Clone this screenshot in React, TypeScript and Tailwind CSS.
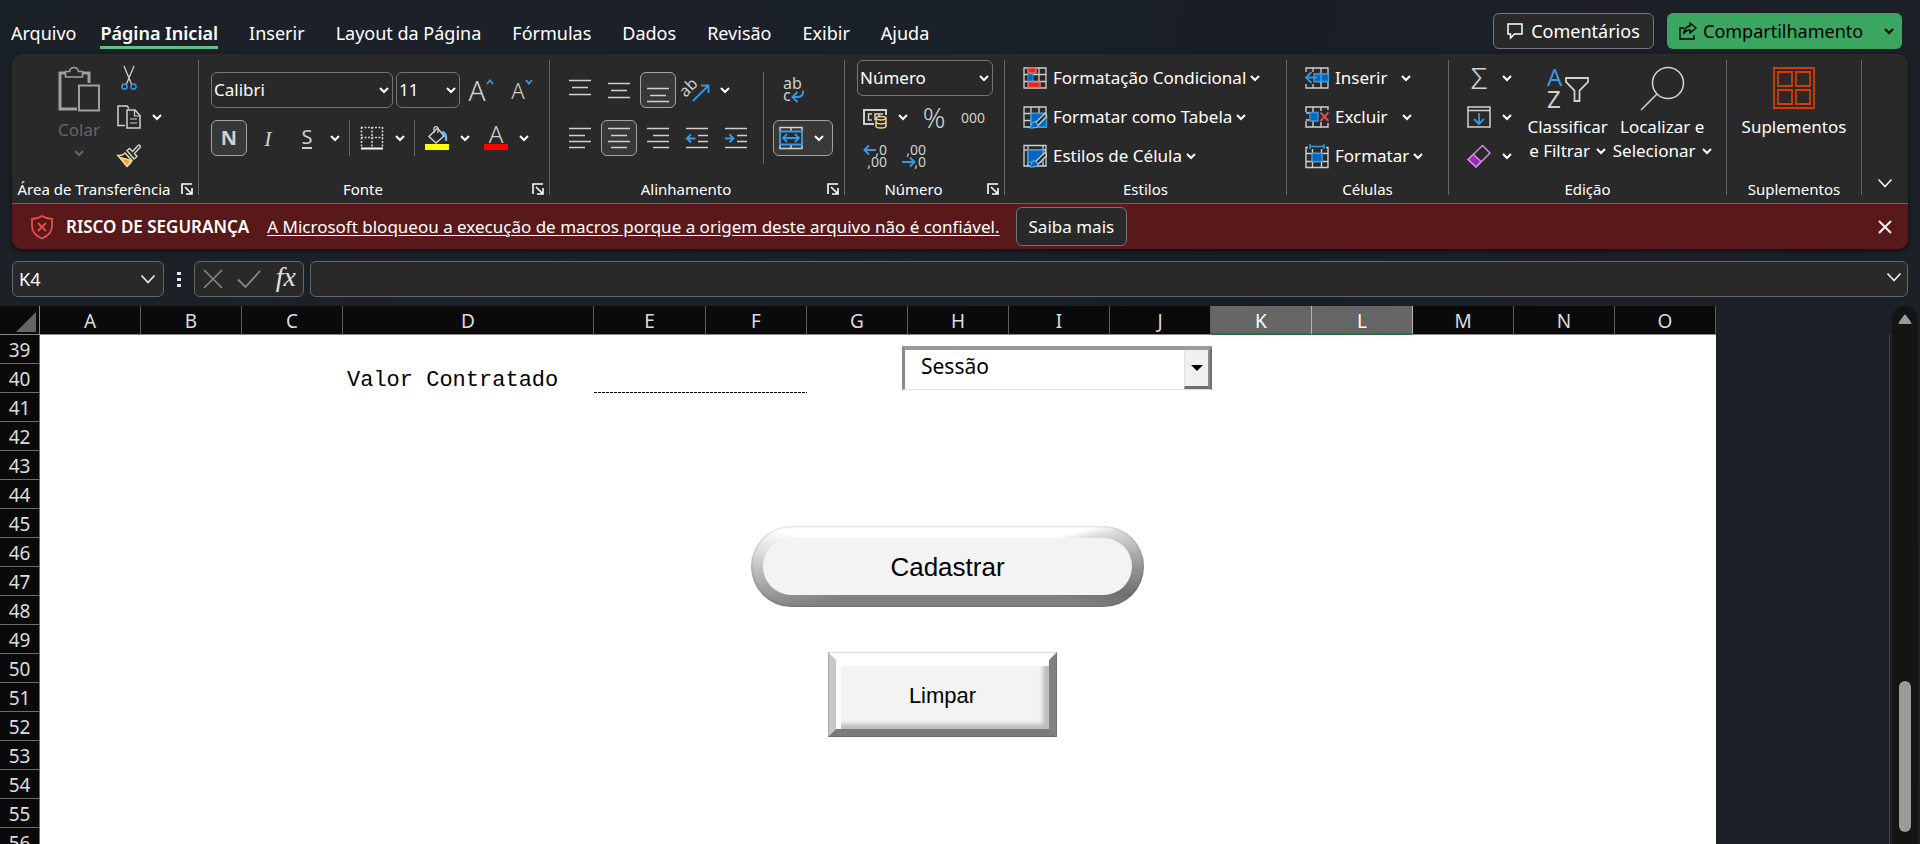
import React, { useState } from 'react';

interface IconProps {
    children: React.ReactNode;
    className?: string;
    viewBox?: string;
}

const Icon: React.FC<IconProps> = ({ children, className = 'w-6 h-6', viewBox = '0 0 24 24' }) => (
    <svg className={`shrink-0 overflow-visible ${className}`} viewBox={viewBox} fill="none" stroke="#d0d0d0" strokeWidth={1.5} aria-hidden="true">
        {children}
    </svg>
);

const Chevron: React.FC<{ className?: string }> = ({ className = 'text-white' }) => (
    <svg className={`w-2.5 h-2.5 shrink-0 ${className}`} viewBox="0 0 10 10" fill="none" stroke="currentColor" strokeWidth={2} aria-hidden="true">
        <path d="M1 3l4 4 4-4" />
    </svg>
);

const BigChevron: React.FC<{ className?: string }> = ({ className = 'w-4 h-4' }) => (
    <svg className={`shrink-0 text-gray-200 ${className}`} viewBox="0 0 16 16" fill="none" stroke="currentColor" strokeWidth={1.8} aria-hidden="true">
        <path d="M1.5 4.5l6.5 7 6.5-7" />
    </svg>
);

interface ToolProps {
    label: string;
    active?: boolean;
    children: React.ReactNode;
}

const Tool: React.FC<ToolProps> = ({ label, active, children }) => (
    <button
        aria-label={label}
        className={`w-9 h-9 shrink-0 flex items-center justify-center rounded-md text-[#d0d0d0] ${active ? 'bg-[#383837] border border-[#a3a3a3]' : ''}`}
    >
        {children}
    </button>
);

const SplitTool: React.FC<ToolProps> = ({ label, children }) => (
    <div className="flex items-center">
        <Tool label={label}>{children}</Tool>
        <button aria-label={`${label}: opções`} className="w-5 h-9 flex items-center justify-center">
            <Chevron />
        </button>
    </div>
);

interface GroupProps {
    title: string;
    width: string;
    launcher?: boolean;
    children: React.ReactNode;
}

const Group: React.FC<GroupProps> = ({ title, width, launcher, children }) => (
    <section className={`h-[135px] shrink-0 flex flex-col justify-between border-r border-[#666666] ${width}`}>
        {children}
        <div className="flex items-center h-3">
            <h2 className="flex-1 text-center text-[15px] leading-3 whitespace-nowrap">{title}</h2>
            {launcher && (
                <button aria-label={`Opções de ${title}`} className="w-[22px] flex justify-center">
                    <svg className="w-3 h-3" viewBox="0 0 12 12" fill="none" stroke="#fff" strokeWidth={1.6} aria-hidden="true">
                        <path d="M1 11V1h10M4 4l6 6M11 5v6H5" />
                    </svg>
                </button>
            )}
        </div>
    </section>
);

const Divider = () => <span className="w-px h-9 mx-px bg-[#666666]" />;

interface DropdownProps {
    label: string;
    value: string;
    width: string;
}

const Dropdown: React.FC<DropdownProps> = ({ label, value, width }) => (
    <div className={`relative ${width}`}>
        <select aria-label={label} className="w-full h-9 pl-0.5 appearance-none rounded-md border border-[#757575] bg-[#292929] text-[17px] text-white">
            <option>{value}</option>
        </select>
        <Chevron className="absolute right-1 top-[13px] pointer-events-none text-white" />
    </div>
);

const lineSets: Record<string, string> = {
    top: 'M1 2.5h22M4 9.5h16M1 16.5h22',
    middle: 'M1 5.5h22M4 12.5h16M1 19.5h22',
    bottom: 'M1 10.5h22M4 17.5h16M1 23.5h22',
    left: 'M1 2.5h22M1 9.5h16M1 15.5h22M1 21.5h16',
    center: 'M1 2.5h22M4 9.5h16M1 15.5h22M4 21.5h16',
    right: 'M1 2.5h22M7 9.5h16M1 15.5h22M7 21.5h16',
    indent: 'M1 2.5h22M13 9.5h10M13 15.5h10M1 21.5h22',
};

const Lines: React.FC<{ kind: string; children?: React.ReactNode }> = ({ kind, children }) => (
    <Icon>
        <path d={lineSets[kind]} />
        {children}
    </Icon>
);

const GridBase = () => <path d="M1 2h22v20H1zM1 8.5h22M1 15.5h22M8 2v20M16 2v20" strokeWidth={1.3} />;

const BrushMark = () => (
    <>
        <path d="M22.5 8L12.5 17.5l2.5 3L23.5 11.5z" fill="#292929" strokeWidth={1.3} />
        <path d="M12.500 17c-3-.5-4 1.500-4.500 3.500-.3 1-2 1.800-3 1.800 3.500 1.500 9.500 .7 10.300-2.300z" fill="#0067c0" stroke="#7cc0f5" strokeWidth={1} />
    </>
);

interface CommandProps {
    icon: React.ReactNode;
    text: string;
    gap?: string;
}

const Command: React.FC<CommandProps> = ({ icon, text, gap = 'ml-1' }) => (
    <button className="h-9 flex items-center text-[17px] whitespace-nowrap">
        {icon}
        <span className="ml-1.5">{text}</span>
        <span className={gap}>
            <Chevron />
        </span>
    </button>
);

const Clipboard = () => (
    <Group title="Área de Transferência" width="w-[187px]" launcher>
        <div className="flex pl-[41px]">
            <button className="w-[52px] pt-1.5 flex flex-col items-center text-[17px] text-[#666666]">
                <svg className="w-[42px] h-[46px]" viewBox="0 0 42 46" fill="none" stroke="#a0a0a0" strokeWidth={2} aria-hidden="true">
                    <path d="M7 7H2v36h17" strokeWidth={3} />
                    <path d="M24 7h7v10" strokeWidth={3} />
                    <path d="M7.5 11V5.5h4C12 2.5 14 1.5 16 1.5s4 1 4.5 4h4V11z" strokeWidth={1.6} />
                    <path d="M21 19.5h20v25H21z" />
                </svg>
                <span className="leading-9">Colar</span>
                <Chevron className="text-[#666666]" />
            </button>
            <div className="flex flex-col gap-[3px] pl-1.5">
                <Tool label="Recortar">
                    <Icon>
                        <path d="M7 0l7.500 18M17 0L9.500 18" strokeWidth={1.3} />
                        <circle cx="7.500" cy="20.500" r="2.600" stroke="#3a96dd" />
                        <circle cx="16.500" cy="20.500" r="2.600" stroke="#3a96dd" />
                    </Icon>
                </Tool>
                <SplitTool label="Copiar">
                    <Icon>
                        <path d="M8 20.5H1V1h9l2 2.5" />
                        <path d="M10 5h8l5 5.5V23H10z" />
                        <path d="M17.5 5v6H23M13 14h7M13 18h7" strokeWidth={1.2} />
                    </Icon>
                </SplitTool>
                <Tool label="Pincel de Formatação">
                    <Icon>
                        <path d="M1 11.5c3 .5 5-.5 7-2.5l7 7.5c-1 3-3 4.5-5 6z" fill="#292929" stroke="#f7d48a" />
                        <path d="M3 13.5l11 3-4 5.500z" fill="#e8a33d" stroke="#f7d48a" />
                        <path d="M10 6.5l2.5-2 3 3L21 1.5c1.5-1 3 .5 2 2L17.5 9.500l2.500 3-3 2.500z" fill="#292929" />
                    </Icon>
                </Tool>
            </div>
        </div>
    </Group>
);

const FontGroup = () => (
    <Group title="Fonte" width="w-[351px]" launcher>
        <div className="flex flex-col gap-3 pl-3 pt-3">
            <div className="flex gap-[3px]">
                <Dropdown label="Fonte" value="Calibri" width="w-[182px]" />
                <Dropdown label="Tamanho da Fonte" value="11" width="w-16" />
                <Tool label="Aumentar Tamanho da Fonte">
                    <span className="text-[28px] leading-9 font-light">A</span>
                    <svg className="w-2 h-2 mb-4" viewBox="0 0 8 8" fill="none" stroke="#3a96dd" strokeWidth={1.8} aria-hidden="true">
                        <path d="M1 6l3-3.5L7 6" />
                    </svg>
                </Tool>
                <Tool label="Diminuir Tamanho da Fonte">
                    <span className="ml-1 text-[22px] leading-9 font-light">A</span>
                    <svg className="w-2 h-2 mb-4" viewBox="0 0 8 8" fill="none" stroke="#3a96dd" strokeWidth={1.8} aria-hidden="true">
                        <path d="M1 2l3 3.5L7 2" />
                    </svg>
                </Tool>
            </div>
            <div className="flex items-center gap-[3px]">
                <Tool label="Negrito" active>
                    <span className="text-[20px] leading-8 font-bold">N</span>
                </Tool>
                <Tool label="Itálico">
                    <span className="text-[22px] italic font-['Liberation_Serif',serif]">I</span>
                </Tool>
                <SplitTool label="Sublinhado">
                    <span className="text-[20px] leading-5 border-b-2 border-[#d0d0d0]">S</span>
                </SplitTool>
                <Divider />
                <SplitTool label="Bordas">
                    <Icon>
                        <path d="M1 1.5h22M1.5 1v20M22.5 1v20M12 1v20M1 11.5h22" strokeWidth={1.6} strokeDasharray="2 1.5" />
                        <path d="M1 22.5h22" stroke="#fff" strokeWidth={2} />
                    </Icon>
                </SplitTool>
                <Divider />
                <SplitTool label="Cor de Preenchimento">
                    <Icon>
                        <path d="M4 10.5L12.5 2l6.5 8-8 7z" />
                        <path d="M9 7V2.5c0-2.5 4-2.5 4 0V7" strokeWidth={1.3} />
                        <path d="M17 6c3.5.5 4.5 3 4 9" stroke="#6cb4ee" strokeWidth={2.5} />
                        <path d="M0 21h24" stroke="#ffff00" strokeWidth={6} />
                    </Icon>
                </SplitTool>
                <SplitTool label="Cor da Fonte">
                    <span className="w-6 h-6 flex justify-center text-[24px] leading-4 font-light border-b-[6px] border-[#ff0000]">A</span>
                </SplitTool>
            </div>
        </div>
    </Group>
);

const AlignmentGroup = () => (
    <Group title="Alinhamento" width="w-[295px]" launcher>
        <div className="flex pl-3 pt-3">
            <div className="flex flex-col gap-3">
                <div className="flex gap-[3px]">
                    <Tool label="Alinhar em Cima"><Lines kind="top" /></Tool>
                    <Tool label="Alinhar no Meio"><Lines kind="middle" /></Tool>
                    <Tool label="Alinhar Embaixo" active><Lines kind="bottom" /></Tool>
                    <SplitTool label="Orientação">
                        <Icon>
                            <text x="-2" y="16" transform="rotate(-45 4 15)" fontSize="16" fill="#d0d0d0" stroke="none">ab</text>
                            <path d="M8 23L23 8M16 7.5h7.5V15" stroke="#3a96dd" strokeWidth={1.8} />
                        </Icon>
                    </SplitTool>
                </div>
                <div className="flex gap-[3px]">
                    <Tool label="Alinhar à Esquerda"><Lines kind="left" /></Tool>
                    <Tool label="Centralizar" active><Lines kind="center" /></Tool>
                    <Tool label="Alinhar à Direita"><Lines kind="right" /></Tool>
                    <Tool label="Diminuir Recuo">
                        <Lines kind="indent"><path d="M10.5 12.5H2M6 8.5l-4 4 4 4" stroke="#3a96dd" strokeWidth={2} /></Lines>
                    </Tool>
                    <Tool label="Aumentar Recuo">
                        <Lines kind="indent"><path d="M1 12.5h8.5M5.5 8.5l4 4-4 4" stroke="#3a96dd" strokeWidth={2} /></Lines>
                    </Tool>
                </div>
            </div>
            <span className="w-px h-[92px] mx-[9px] bg-[#666666]" />
            <div className="flex flex-col gap-3">
                <button aria-label="Quebrar Texto Automaticamente" className="w-10 h-9 flex items-center justify-center">
                    <Icon>
                        <text x="2" y="11" fontSize="16" fill="#d0d0d0" stroke="none">ab</text>
                        <text x="2" y="23" fontSize="16" fill="#d0d0d0" stroke="none">c</text>
                        <path d="M22 12.500c1 4-2 6.500-5 6.500h-5M16.500 14l-5 5 5 5" stroke="#3a96dd" strokeWidth={2} />
                    </Icon>
                </button>
                <button aria-label="Mesclar e Centralizar" className="w-[60px] h-9 px-[5px] pr-2 flex items-center justify-between rounded-md border border-[#a3a3a3] bg-[#383837]">
                    <Icon>
                        <path d="M1 1.5h22v21H1zM12 1v5M12 18v5" />
                        <path d="M1 5.5h22v13H1z" fill="#292929" stroke="#3a96dd" strokeWidth={2} />
                        <path d="M4 12h16M8 8l-4 4 4 4M16 8l4 4-4 4" stroke="#3a96dd" strokeWidth={1.8} />
                    </Icon>
                    <Chevron />
                </button>
            </div>
        </div>
    </Group>
);

const NumberGroup = () => (
    <Group title="Número" width="w-[160px]" launcher>
        <div className="flex flex-col gap-[3px] pl-3">
            <Dropdown label="Formato de Número" value="Número" width="w-[136px]" />
            <div className="flex items-center gap-[3px]">
                <SplitTool label="Formato de Número de Contabilização">
                    <Icon>
                        <path d="M11 19H1V5h22v5" strokeWidth={2} />
                        <path d="M9 9H5.5v6H9M16 14V9h-4v6M16 9h4" />
                        <path d="M13 13v8.500c1 2 9 2 10 0V13c-1-2-9-2-10 0z" fill="#292929" stroke="#f7d48a" />
                        <path d="M13 13.5c2 2 8 2 10 0M13 17.5c2 2 8 2 10 0" stroke="#f7d48a" />
                    </Icon>
                </SplitTool>
                <Tool label="Estilo de Porcentagem"><span className="text-[28px] leading-9 font-light">%</span></Tool>
                <Tool label="Separador de Milhares"><span className="text-[14px]">000</span></Tool>
            </div>
            <div className="flex items-center gap-[3px]">
                <Tool label="Aumentar Casas Decimais">
                    <Icon>
                        <text x="24" y="11" textAnchor="end" fontSize="14" fill="#d0d0d0" stroke="none">,0</text>
                        <text x="24" y="23" textAnchor="end" fontSize="14" fill="#d0d0d0" stroke="none">,00</text>
                        <path d="M13 6H1.5M6 1.500L1.500 6 6 10.500" stroke="#3a96dd" strokeWidth={2} />
                    </Icon>
                </Tool>
                <Tool label="Diminuir Casas Decimais">
                    <Icon>
                        <text x="24" y="11" textAnchor="end" fontSize="14" fill="#d0d0d0" stroke="none">,00</text>
                        <text x="24" y="23" textAnchor="end" fontSize="14" fill="#d0d0d0" stroke="none">,0</text>
                        <path d="M0 18h12.5M8 13.5l4.500 4.500L8 22.500" stroke="#3a96dd" strokeWidth={2} />
                    </Icon>
                </Tool>
            </div>
        </div>
    </Group>
);

const StylesGroup = () => (
    <Group title="Estilos" width="w-[282px]">
        <div className="flex flex-col gap-[3px] pl-[18px] items-start">
            <Command
                text="Formatação Condicional"
                icon={
                    <Icon>
                        <GridBase />
                        <path d="M5 2h8v5H5zM5 16h12v5.5H5z" fill="#dc2a1c" stroke="#f06a60" />
                        <path d="M5 8h5v7H5z" fill="#0067c0" stroke="#3a96dd" strokeWidth={1} />
                    </Icon>
                }
            />
            <Command
                text="Formatar como Tabela"
                icon={
                    <Icon>
                        <GridBase />
                        <path d="M8 8.5h15.5V22H8z" fill="#0067c0" stroke="#3a96dd" />
                        <BrushMark />
                    </Icon>
                }
            />
            <Command
                text="Estilos de Célula"
                icon={
                    <Icon>
                        <path d="M1 1.5h22v20.5H1zM1 6h22M5 1.5V22M20 1.5V22" strokeWidth={1.3} />
                        <path d="M5 6h15v12H5z" fill="#0067c0" stroke="#3a96dd" />
                        <BrushMark />
                    </Icon>
                }
            />
        </div>
    </Group>
);

const CellsGroup = () => (
    <Group title="Células" width="w-[162px]">
        <div className="flex flex-col gap-[3px] pl-[18px] items-start">
            <Command
                text="Inserir"
                gap="ml-[14px]"
                icon={
                    <Icon>
                        <GridBase />
                        <path d="M0 6h9v12H0z" fill="#292929" stroke="none" />
                        <path d="M9 8h14.5v7.5H9z" fill="#0067c0" stroke="#3a96dd" />
                        <path d="M16 8v7.5M12 11.5H1.5M6.5 6l-5.5 5.5 5.5 5.5" stroke="#3a96dd" strokeWidth={1.8} />
                    </Icon>
                }
            />
            <Command
                text="Excluir"
                gap="ml-[14px]"
                icon={
                    <Icon>
                        <path d="M1 7V2h22v3M1 16v6h22v-4M8 2v5M16 2v4M8 16v6M16 17v5M1 8h5M1 15h5" strokeWidth={1.4} />
                        <path d="M5 7.5h8v8.5H5z" fill="#0067c0" stroke="#3a96dd" />
                        <path d="M15.5 7.5l8 8.5M23.5 7.5l-8 8.5" stroke="#e04a43" strokeWidth={2} />
                    </Icon>
                }
            />
            <Command
                text="Formatar"
                icon={
                    <Icon>
                        <path d="M3 3.5H1v20h22v-20h-2M1 9.5h22M1 17.5h22M7.5 5v18M16.5 5v18" strokeWidth={1.4} />
                        <path d="M7 9.5h10v8H7z" fill="#0067c0" stroke="#3a96dd" />
                        <path d="M5 0v5M19 0v5M5 2.5h14" stroke="#3a96dd" />
                    </Icon>
                }
            />
        </div>
    </Group>
);

const EditingGroup = () => (
    <Group title="Edição" width="w-[278px]">
        <div className="flex pl-3">
            <div className="flex flex-col gap-[3px]">
                <SplitTool label="Soma"><span className="text-[30px] leading-9 font-light">Σ</span></SplitTool>
                <SplitTool label="Preencher">
                    <Icon>
                        <path d="M1 2h22v20H1zM1 5.5h22" />
                        <path d="M12 8v11M7 14l5 5 5-5" stroke="#3a96dd" strokeWidth={1.8} />
                    </Icon>
                </SplitTool>
                <SplitTool label="Limpar">
                    <Icon>
                        <path d="M1 15.5L15.5 1.5l7.5 7.5L9 23z" stroke="#cf8ae0" />
                        <path d="M1 15.5l5.5-5 7.5 7L9 23z" fill="#9a2fae" stroke="#cf8ae0" />
                    </Icon>
                </SplitTool>
            </div>
            <div className="flex flex-1 justify-around pr-3 pl-2">
                <button className="flex flex-col items-center pt-[7px] text-[17px] leading-6">
                    <svg className="w-[42px] h-[42px] overflow-visible" viewBox="0 0 42 42" fill="none" stroke="#d0d0d0" strokeWidth={1.5} aria-hidden="true">
                        <text x="0" y="19" fontSize="24" fill="#3a96dd" stroke="none">A</text>
                        <text x="0" y="41" fontSize="24" fill="#d0d0d0" stroke="none">Z</text>
                        <path d="M19 11h22v4l-8.500 8.500V34h-5V23.500L19 15z" strokeWidth={1.8} />
                    </svg>
                    <span className="mt-1.5">Classificar</span>
                    <span className="flex items-center gap-1.5">e Filtrar <Chevron /></span>
                </button>
                <button className="flex flex-col items-center pt-[7px] text-[17px] leading-6">
                    <svg className="w-[46px] h-[42px] overflow-visible" viewBox="0 0 46 42" fill="none" stroke="#d0d0d0" strokeWidth={1.6} aria-hidden="true">
                        <circle cx="29" cy="16" r="15.500" />
                        <path d="M18 27L2 43" />
                    </svg>
                    <span className="mt-1.5">Localizar e</span>
                    <span className="flex items-center gap-1.5">Selecionar <Chevron /></span>
                </button>
            </div>
        </div>
    </Group>
);

const AddinsGroup = () => (
    <Group title="Suplementos" width="w-[135px]">
        <button className="flex flex-col items-center pt-[7px] text-[17px] leading-6">
            <svg className="w-[42px] h-[42px]" viewBox="0 0 42 42" fill="none" stroke="#d83b01" strokeWidth={1.8} aria-hidden="true">
                <path d="M1 1h40v40H1zM5 5h14v14H5zM23 5h14v14H23zM5 23h14v14H5zM23 23h14v14H23z" />
            </svg>
            <span className="mt-1.5">Suplementos</span>
        </button>
    </Group>
);

const tabs = ['Arquivo', 'Página Inicial', 'Inserir', 'Layout da Página', 'Fórmulas', 'Dados', 'Revisão', 'Exibir', 'Ajuda'];

const columns = [
    { name: 'A', width: 'w-[101px]' },
    { name: 'B', width: 'w-[101px]' },
    { name: 'C', width: 'w-[101px]' },
    { name: 'D', width: 'w-[251px]' },
    { name: 'E', width: 'w-[112px]' },
    { name: 'F', width: 'w-[101px]' },
    { name: 'G', width: 'w-[101px]' },
    { name: 'H', width: 'w-[101px]' },
    { name: 'I', width: 'w-[101px]' },
    { name: 'J', width: 'w-[101px]' },
    { name: 'K', width: 'w-[101px]' },
    { name: 'L', width: 'w-[101px]' },
    { name: 'M', width: 'w-[101px]' },
    { name: 'N', width: 'w-[101px]' },
    { name: 'O', width: 'w-[101px]' },
];

const rows = Array.from({ length: 18 }, (_, i) => 39 + i);

const Sheet = () => (
    <div className="relative shrink-0 overflow-hidden">
        <table className="table-fixed border-separate border-spacing-0 w-[1716px] text-[19px]">
            <thead>
                <tr className="h-[29px]">
                    <th className="w-10 p-0 bg-[#0a0a0a] border-r border-b border-[#8a8a8a]" aria-label="Selecionar Tudo">
                        <svg className="w-5 h-5 ml-4 mt-1" viewBox="0 0 20 20" aria-hidden="true">
                            <path d="M20 0v20H0z" fill="#666666" />
                        </svg>
                    </th>
                    {columns.map(({ name, width }) => {
                        const selected = name === 'K' || name === 'L';
                        return (
                            <th
                                key={name}
                                className={`p-0 pt-0.5 font-normal leading-6 border-r ${width} ${selected ? 'bg-[#666666] text-white border-b-2 border-r-[#b5b5b5] border-b-[#217346]' : 'bg-[#0a0a0a] text-[#dcdcdc] border-b border-r-[#5c5c5c] border-b-[#8a8a8a]'}`}
                            >
                                {name}
                            </th>
                        );
                    })}
                </tr>
            </thead>
            <tbody>
                {rows.map((row) => (
                    <tr key={row} className="h-[29px]">
                        <th className="p-0 pt-0.5 font-normal leading-[26px] bg-[#0a0a0a] text-[#dcdcdc] border-r border-b border-[#6e6e6e]">{row}</th>
                        {columns.map(({ name }) => {
                            if (row === 40 && name === 'D') {
                                return (
                                    <td key={name} className="p-0 pl-1 pt-1 bg-white text-black text-[22px] leading-6 font-['Liberation_Mono',monospace]">
                                        Valor Contratado
                                    </td>
                                );
                            }
                            const underlined = row === 40 && (name === 'E' || name === 'F');
                            return (
                                <td
                                    key={name}
                                    className={`p-0 bg-white ${underlined ? 'bg-[repeating-linear-gradient(90deg,#000_0_3px,#fff_3px_4px)] bg-size-[100%_1px] bg-bottom bg-no-repeat' : ''}`}
                                />
                            );
                        })}
                    </tr>
                ))}
            </tbody>
        </table>

        {/* controls floating over the cells */}
        <div className="absolute left-[902px] top-10 w-[310px] h-11">
            <select aria-label="Tipo de contratação" className="w-full h-full pl-4 pb-1.5 appearance-none bg-white text-[21px] text-black border-t-4 border-l-3 border-r-2 border-b border-t-[#9a9a9a] border-l-[#8a8a8a] border-r-[#6e6e6e] border-b-[#e0e0e0]">
                <option>Sessão</option>
            </select>
            <span className="absolute right-0.5 top-1 w-[26px] h-[39px] pointer-events-none flex items-center justify-center bg-[#f0f0f0] border-l border-r-2 border-b-3 border-l-[#e0e0e0] border-r-[#8a8a8a] border-b-[#6e6e6e]">
                <svg className="w-3 h-1.5" viewBox="0 0 12 6" aria-hidden="true">
                    <path d="M0 0h12L6 6z" fill="#000" />
                </svg>
            </span>
        </div>
        <button className="absolute left-[751px] top-[220px] w-[393px] h-[81px] p-3 rounded-full font-['Liberation_Sans',sans-serif] text-[26px] text-black shadow-[inset_0_0_2px_1px_#0002] bg-[conic-gradient(#fff_0deg,#fff_75deg,#d8d8d8_79deg,#929698_90deg,#707070_99deg,#808080_105deg,#808080_254deg,#8c8f91_259deg,#b4b4b4_267deg,#e0e0e0_275deg,#fff_282deg,#fff_360deg)]">
            <span className="w-full h-full pt-0.5 flex items-center justify-center rounded-full bg-[#f3f3f3]">Cadastrar</span>
        </button>
        <button className="absolute left-[828px] top-[346px] w-[229px] h-[85px] pt-0.5 font-['Liberation_Sans',sans-serif] text-[22px] text-black bg-[#f3f3f3] outline outline-[#0002] -outline-offset-1 border-8 border-t-white border-l-[#c8c6c7] border-r-[#7f8183] border-b-[#7a7a7a] shadow-[inset_5px_6px_1px_#fff,inset_-6px_-5px_4px_#bdbdbd]">
            Limpar
        </button>
    </div>
);

const App: React.FC = () => {
    const [showWarning, setShowWarning] = useState(true);
    const [formula, setFormula] = useState('');
    const [cell, setCell] = useState('K4');

    return (
        <div className="h-screen flex flex-col overflow-hidden bg-[linear-gradient(100deg,#1a2126_0%,#1d2029_20%,#1a2128_45%,#191e26_60%,#1c1f27_85%,#1a2126_100%)] text-white font-['Noto_Sans','Open_Sans',sans-serif]">
            <header className="h-[54px] shrink-0 flex items-end justify-between pb-[5px] pl-[11px] pr-[18px]">
                <nav className="flex text-[18px]">
                    {tabs.map((tab, i) => (
                        <button
                            key={tab}
                            className={`h-7 leading-6 pb-px whitespace-nowrap border-b-3 ${i === 0 ? 'mr-6' : 'mr-[31px]'} ${tab === 'Página Inicial' ? 'font-semibold border-[#5fbf84]' : 'border-transparent'}`}
                        >
                            {tab}
                        </button>
                    ))}
                </nav>
                <div className="flex gap-[13px] text-[18px]">
                    <button className="w-[161px] h-9 flex items-center justify-center gap-2 rounded-md border border-[#757575] bg-[#292929]">
                        <Icon className="w-4 h-4" viewBox="0 0 16 16">
                            <path d="M1 1h14v10H7.5L3.500 15v-4H1z" stroke="#fff" />
                        </Icon>
                        Comentários
                    </button>
                    <button className="w-[235px] h-9 pl-3 pr-2 flex items-center rounded-md bg-[#3aa660] text-black">
                        <Icon className="w-[18px] h-[18px]" viewBox="0 0 18 18">
                            <path d="M5 6H1v11h14v-4" stroke="#000" strokeWidth={1.3} />
                            <path d="M11 1l6 5-6 5V8C8 8 6 9.5 4.500 12 5 7.500 7.500 4.500 11 4z" stroke="#000" strokeWidth={1.3} />
                        </Icon>
                        <span className="flex-1 ml-1.5 text-left">Compartilhamento</span>
                        <Chevron className="text-black" />
                    </button>
                </div>
            </header>

            <main className="flex flex-col flex-1 min-h-0">
                <div className="shrink-0 mx-3 rounded-[10px] overflow-hidden bg-[#292929] shadow-[0_2px_5px_#0008]">
                    <div className="flex pt-1.5 pb-2">
                        <Clipboard />
                        <FontGroup />
                        <AlignmentGroup />
                        <NumberGroup />
                        <StylesGroup />
                        <CellsGroup />
                        <EditingGroup />
                        <AddinsGroup />
                        <div className="flex-1 flex items-end justify-center pb-1">
                            <button aria-label="Recolher a Faixa de Opções"><BigChevron /></button>
                        </div>
                    </div>
                    {showWarning && (
                        <div role="alert" className="h-[46px] flex items-center border-t border-[#666666] bg-[#591819] pl-[18px] pr-4 text-[17px]">
                            <Icon className="w-6 h-6">
                                <path d="M12 1c3 2 6.500 3 10 3v7c0 6-4 10-10 12.500C6 21 2 17 2 11V4c3.500 0 7-1 10-3z" stroke="#e8504a" strokeWidth={1.8} />
                                <path d="M8 8l8 8M16 8l-8 8" stroke="#e8504a" strokeWidth={1.8} />
                            </Icon>
                            <strong className="ml-3 font-semibold whitespace-nowrap">RISCO DE SEGURANÇA</strong>
                            <a href="#macros" className="ml-[18px] underline underline-offset-2 whitespace-nowrap">
                                A Microsoft bloqueou a execução de macros porque a origem deste arquivo não é confiável.
                            </a>
                            <button className="ml-4 h-[39px] px-3 rounded-md border border-[#757575] bg-[#292929] whitespace-nowrap">Saiba mais</button>
                            <button aria-label="Fechar" onClick={() => setShowWarning(false)} className="ml-auto">
                                <Icon className="w-3.5 h-3.5" viewBox="0 0 14 14">
                                    <path d="M1 1l12 12M13 1L1 13" stroke="#fff" strokeWidth={1.8} />
                                </Icon>
                            </button>
                        </div>
                    )}
                </div>

                <div className="shrink-0 flex items-center mx-3 mt-3 mb-[9px] h-9">
                    <div className="relative w-[152px]">
                        <input
                            aria-label="Caixa de Nome"
                            value={cell}
                            onChange={(e) => setCell(e.target.value)}
                            className="w-full h-9 pl-1.5 rounded-md border border-[#666666] bg-[#292929] text-[18px]"
                        />
                        <BigChevron className="absolute right-2 top-2.5 w-4 h-4 pointer-events-none" />
                    </div>
                    <span className="w-[30px] flex flex-col items-center gap-[3px]">
                        <i className="w-1 h-[3px] bg-gray-200" />
                        <i className="w-1 h-[3px] bg-gray-200" />
                        <i className="w-1 h-[3px] bg-gray-200" />
                    </span>
                    <div className="w-[110px] h-9 flex items-center justify-between pl-2 pr-[7px] rounded-md border border-[#666666] bg-[#292929]">
                        <button aria-label="Cancelar">
                            <Icon className="w-5 h-5" viewBox="0 0 20 20"><path d="M1 1l18 18M19 1L1 19" stroke="#8a8a8a" /></Icon>
                        </button>
                        <button aria-label="Inserir">
                            <Icon className="w-6 h-5" viewBox="0 0 24 20"><path d="M1 10.5L8.5 18 23 2" stroke="#8a8a8a" strokeWidth={1.8} /></Icon>
                        </button>
                        <button aria-label="Inserir Função" className="text-[28px] leading-7 pb-1 italic text-[#e0e0e0] font-['Liberation_Serif',serif]">fx</button>
                    </div>
                    <div className="relative flex-1 ml-1.5">
                        <input
                            aria-label="Barra de Fórmulas"
                            value={formula}
                            onChange={(e) => setFormula(e.target.value)}
                            className="w-full h-9 px-2 pr-8 rounded-md border border-[#666666] bg-[#292929] text-[17px]"
                        />
                        <BigChevron className="absolute right-1.5 top-2 w-4 h-4 pointer-events-none" />
                    </div>
                </div>

                <div className="flex flex-1 min-h-0">
                    <Sheet />
                    <div className="flex-1 mt-7 mr-0.5 border-r border-[#3c4144]" />
                    <div className="w-[26px] mr-0.5 rounded-t-full bg-[#141414] flex flex-col items-center justify-between pt-2 pb-3">
                        <svg className="w-3.5 h-2.5" viewBox="0 0 14 10" aria-hidden="true">
                            <path d="M7 1.5L12.5 9h-11z" fill="#9a9a9a" stroke="#9a9a9a" strokeWidth={2} strokeLinejoin="round" />
                        </svg>
                        <span className="w-3 h-[151px] rounded-full bg-[#9a9a9a]" />
                    </div>
                </div>
            </main>
        </div>
    );
};

export default App;
